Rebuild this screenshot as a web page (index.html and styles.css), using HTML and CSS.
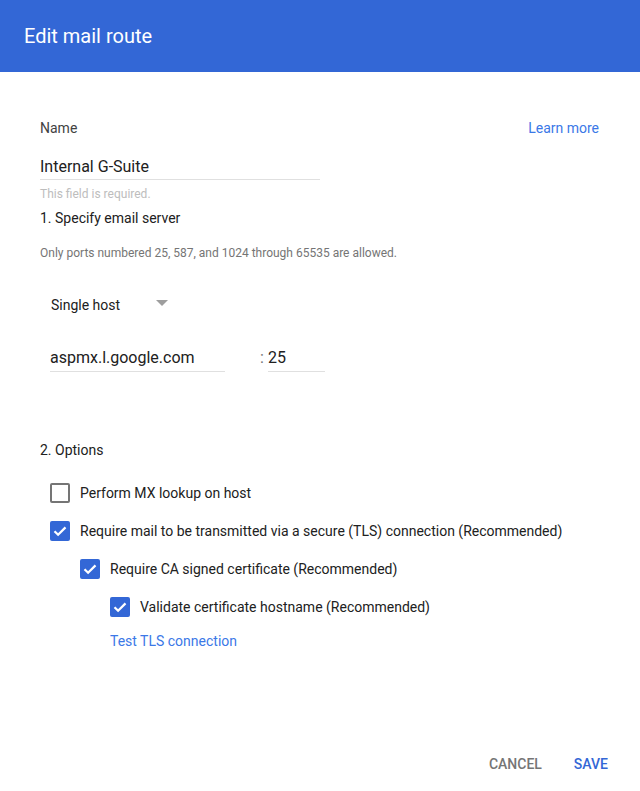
FILE: index.html
```html
<!DOCTYPE html>
<html>
<head>
<meta charset="utf-8">
<link rel="stylesheet" href="styles.css">
</head>
<body>
<div class="dialog">
  <header class="header">Edit mail route</header>
  <main class="content">
    <div class="name-row">
      <span class="label">Name</span>
      <a class="link">Learn more</a>
    </div>
    <div class="field name-field">Internal G-Suite</div>
    <div class="hint">This field is required.</div>
    <div class="section">1. Specify email server</div>
    <div class="note">Only ports numbered 25, 587, and 1024 through 65535 are allowed.</div>
    <div class="select">
      <span>Single host</span>
      <span class="arrow"></span>
    </div>
    <div class="host-row">
      <div class="field host-field">aspmx.l.google.com</div>
      <span class="colon">:</span>
      <div class="field port-field">25</div>
    </div>
    <div class="section options-title">2. Options</div>
    <div class="options">
      <div class="check lvl0">
        <span class="box"></span><span>Perform MX lookup on host</span>
      </div>
      <div class="check lvl0">
        <span class="box on"><svg viewBox="0 0 20 20"><path d="M4.5 10.2l3.6 3.6 7.4-7.4" fill="none" stroke="#fff" stroke-width="2.2"/></svg></span><span>Require mail to be transmitted via a secure (TLS) connection (Recommended)</span>
      </div>
      <div class="check lvl1">
        <span class="box on"><svg viewBox="0 0 20 20"><path d="M4.5 10.2l3.6 3.6 7.4-7.4" fill="none" stroke="#fff" stroke-width="2.2"/></svg></span><span>Require CA signed certificate (Recommended)</span>
      </div>
      <div class="check lvl2">
        <span class="box on"><svg viewBox="0 0 20 20"><path d="M4.5 10.2l3.6 3.6 7.4-7.4" fill="none" stroke="#fff" stroke-width="2.2"/></svg></span><span>Validate certificate hostname (Recommended)</span>
      </div>
      <a class="link test-link">Test TLS connection</a>
    </div>
  </main>
  <footer class="footer">
    <span class="btn cancel">CANCEL</span>
    <span class="btn save">SAVE</span>
  </footer>
</div>
</body>
</html>
```
FILE: styles.css
```css
html, body {
  margin: 0;
  padding: 0;
  background: #fff;
}
body {
  font-family: Roboto, "Noto Sans", sans-serif;
  color: #212121;
  width: 640px;
  height: 791px;
  overflow: hidden;
}
.dialog {
  display: flex;
  flex-direction: column;
  height: 791px;
}
.header {
  background: #3367d6;
  color: #fff;
  height: 72px;
  box-sizing: border-box;
  padding: 24px 24px 0;
  font-size: 20px;
  line-height: 24px;
  font-weight: 400;
}
.content {
  flex: 1;
  padding: 0 40px;
}
.name-row {
  display: flex;
  justify-content: space-between;
  align-items: center;
  margin-top: 48px;
  height: 16px;
  font-size: 14px;
}
.label {
  color: #424242;
}
.link {
  color: #3b78e7;
  font-size: 14px;
  cursor: pointer;
}
.name-row .link {
  margin-right: 1px;
}
.field {
  font-size: 16px;
  color: #212121;
  border-bottom: 1px solid #e0e0e0;
  box-sizing: border-box;
}
.name-field {
  width: 280px;
  margin-top: 21px;
  height: 23px;
  line-height: 20px;
}
.hint {
  font-size: 12px;
  color: #bdbdbd;
  margin-top: 7px;
  line-height: 15px;
}
.section {
  font-size: 14px;
  line-height: 18px;
  margin-top: 7px;
}
.note {
  font-size: 12px;
  color: #757575;
  margin-top: 19px;
  line-height: 15px;
}
.select {
  display: flex;
  align-items: center;
  margin: 35px 0 0 11px;
  height: 18px;
  font-size: 14px;
}
.arrow {
  width: 0;
  height: 0;
  border-left: 6px solid transparent;
  border-right: 6px solid transparent;
  border-top: 6px solid #9e9e9e;
  margin-left: 36px;
  margin-top: -4px;
}
.host-row {
  display: flex;
  align-items: flex-end;
  margin: 34px 0 0 10px;
}
.host-field {
  width: 175px;
  height: 24px;
  line-height: 20px;
}
.colon {
  font-size: 16px;
  margin-left: 35px;
  width: 8px;
  height: 24px;
  line-height: 20px;
  color: #757575;
}
.port-field {
  width: 57px;
  height: 24px;
  line-height: 20px;
}
.options-title {
  margin-top: 69px;
}
.options {
  margin-top: 24px;
  padding-left: 10px;
  display: flex;
  flex-direction: column;
}
.check {
  display: flex;
  align-items: center;
  height: 20px;
  margin-bottom: 18px;
  font-size: 14px;
  color: #212121;
}
.lvl1 { padding-left: 30px; }
.lvl2 { padding-left: 60px; }
.box {
  width: 20px;
  height: 20px;
  box-sizing: border-box;
  border: 2px solid #757575;
  border-radius: 2px;
  margin-right: 10px;
  flex: none;
  display: flex;
}
.box.on {
  background: #3367d6;
  border: none;
}
.box svg {
  width: 20px;
  height: 20px;
}
.test-link {
  margin-left: 60px;
  margin-top: -2px;
}
.footer {
  display: flex;
  justify-content: flex-end;
  gap: 32px;
  padding: 0 32px 19px 0;
  font-size: 14px;
  font-weight: 500;
}
.cancel { color: #757575; }
.save { color: #3367d6; }
```
